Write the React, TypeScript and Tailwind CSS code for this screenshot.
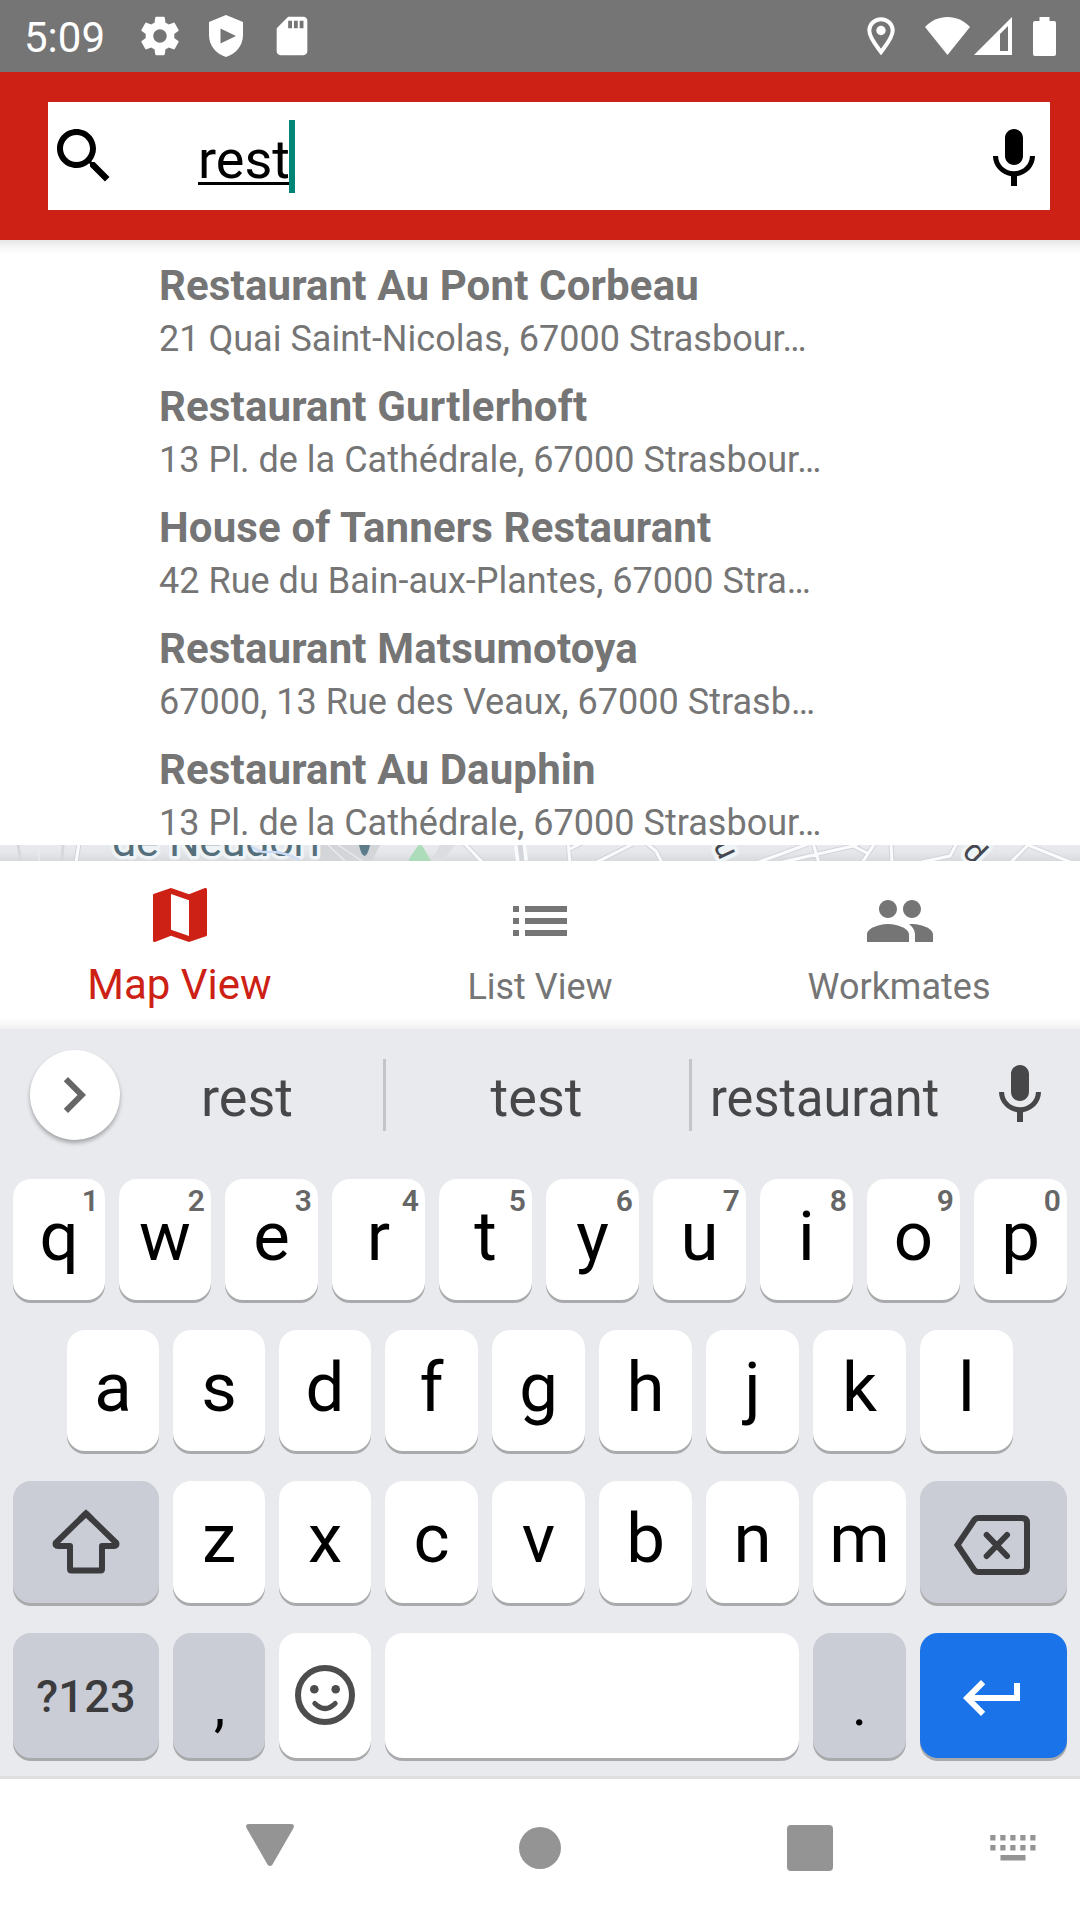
import React from "react";

type Suggestion = { name: string; address: string };

const suggestions: Suggestion[] = [
  { name: "Restaurant Au Pont Corbeau", address: "21 Quai Saint-Nicolas, 67000 Strasbour…" },
  { name: "Restaurant Gurtlerhoft", address: "13 Pl. de la Cathédrale, 67000 Strasbour…" },
  { name: "House of Tanners Restaurant", address: "42 Rue du Bain-aux-Plantes, 67000 Stra…" },
  { name: "Restaurant Matsumotoya", address: "67000, 13 Rue des Veaux, 67000 Strasb…" },
  { name: "Restaurant Au Dauphin", address: "13 Pl. de la Cathédrale, 67000 Strasbour…" },
];

function Glyph({ d, className }: { d: string; className: string }) {
  return (
    <svg viewBox="0 0 24 24" fill="currentColor" className={`block shrink-0 ${className}`}>
      <path d={d} />
    </svg>
  );
}

const MIC =
  "M12 15c1.66 0 2.99-1.34 2.99-3L15 6c0-1.66-1.34-3-3-3S9 4.34 9 6v6c0 1.66 1.34 3 3 3zm5.3-3c0 3-2.54 5.1-5.3 5.1S6.7 15 6.7 12H5c0 3.42 2.72 6.23 6 6.72V22h2v-3.28c3.28-.48 6-3.3 6-6.72h-1.7z";
const SEARCH =
  "M15.5 14h-.79l-.28-.27C15.41 12.59 16 11.11 16 9.5 16 5.91 13.09 3 9.5 3S3 5.91 3 9.5 5.91 16 9.5 16c1.61 0 3.09-.59 4.23-1.57l.27.28v.79l5 4.99L20.49 19l-4.99-5zm-6 0C7.01 14 5 11.99 5 9.5S7.01 5 9.5 5 14 7.01 14 9.5 11.99 14 9.5 14z";
const GEAR =
  "M19.43 12.98c.04-.32.07-.64.07-.98s-.03-.66-.07-.98l2.11-1.65c.19-.15.24-.42.12-.64l-2-3.46c-.12-.22-.39-.3-.61-.22l-2.49 1c-.52-.4-1.08-.73-1.69-.98l-.38-2.65C14.46 2.18 14.25 2 14 2h-4c-.25 0-.46.18-.49.42l-.38 2.65c-.61.25-1.17.59-1.69.98l-2.49-1c-.23-.09-.49 0-.61.22l-2 3.46c-.13.22-.07.49.12.64l2.11 1.65c-.04.32-.07.65-.07.98s.03.66.07.98l-2.11 1.65c-.19.15-.24.42-.12.64l2 3.46c.12.22.39.3.61.22l2.49-1c.52.4 1.08.73 1.69.98l.38 2.65c.03.24.24.42.49.42h4c.25 0 .46-.18.49-.42l.38-2.65c.61-.25 1.17-.59 1.69-.98l2.49 1c.23.09.49 0 .61-.22l2-3.46c.12-.22.07-.49-.12-.64l-2.11-1.65zM12 15.5c-1.93 0-3.5-1.57-3.5-3.5s1.57-3.5 3.5-3.5 3.5 1.57 3.5 3.5-1.57 3.5-3.5 3.5z";
const SD =
  "M18 2h-8L4.02 8 4 20c0 1.1.9 2 2 2h12c1.1 0 2-.9 2-2V4c0-1.1-.9-2-2-2zm-6 6h-2V4h2v4zm3 0h-2V4h2v4zm3 0h-2V4h2v4z";
const MAP =
  "M20.5 3l-.16.03L15 5.1 9 3 3.36 4.9c-.21.07-.36.25-.36.48V20.5c0 .28.22.5.5.5l.16-.03L9 18.9l6 2.1 5.64-1.9c.21-.07.36-.25.36-.48V3.5c0-.28-.22-.5-.5-.5zM15 19l-6-2.11V5l6 2.11V19z";
const LIST = "M3 13h2v-2H3v2zm0 4h2v-2H3v2zm0-8h2V7H3v2zm4 4h14v-2H7v2zm0 4h14v-2H7v2zM7 7v2h14V7H7z";
const PEOPLE =
  "M16 11c1.66 0 2.99-1.34 2.99-3S17.66 5 16 5c-1.66 0-3 1.34-3 3s1.34 3 3 3zm-8 0c1.66 0 2.99-1.34 2.99-3S9.66 5 8 5C6.34 5 5 6.34 5 8s1.34 3 3 3zm0 2c-2.33 0-7 1.17-7 3.5V19h14v-2.5c0-2.33-4.67-3.5-7-3.5zm8 0c-.29 0-.62.02-.97.05 1.16.84 1.97 1.97 1.97 3.45V19h6v-2.5c0-2.33-4.67-3.5-7-3.5z";
const CHEVRON = "M10 6L8.59 7.41 13.17 12l-4.58 4.59L10 18l6-6z";
const RETURN = "M19 7v4H5.83l3.58-3.59L8 6l-6 6 6 6 1.41-1.41L5.83 13H21V7z";

function StatusBar() {
  return (
    <header className="flex h-[72px] items-center bg-[#757575] pl-6 pr-6 text-white">
      <span className="w-[113px] pt-[3px] text-[42px] leading-[72px]">5:09</span>
      <Glyph d={GEAR} className="size-[46px]" />
      <svg viewBox="0 0 34 42" className="ml-[26px] h-[42px] w-[34px]" fill="currentColor">
        <path
          fillRule="evenodd"
          d="M17 0L34 7v13c0 10.500-7 19-17 22C7 39 0 30.500 0 20V7zM11.500 13.500v15L27 21z"
        />
      </svg>
      <Glyph d={SD} className="ml-[26px] size-[46px]" />
      <div className="ml-auto flex items-center">
        <svg viewBox="0 0 28 38" className="h-[38px] w-7">
          <path
            d="M14 2.200C7.500 2.200 2.300 7.200 2.300 13.600C2.300 21 10 29.500 14 35C18 29.500 25.700 21 25.700 13.600C25.700 7.200 20.500 2.200 14 2.200Z"
            fill="none"
            stroke="currentColor"
            strokeWidth="4"
          />
          <circle cx="14" cy="13.500" r="4.700" fill="currentColor" />
        </svg>
        <svg viewBox="0 0 45 38" className="ml-[30px] h-[38px] w-[45px]" fill="currentColor">
          <path d="M0 10C6 3.500 14 0 22.500 0S39 3.500 45 10L22.500 38z" />
        </svg>
        <svg viewBox="0 0 38 38" className="ml-1 h-[38px] w-[38px]" fill="currentColor">
          <path fillRule="evenodd" d="M38 0V38H0zM34 9L26 17V34h8z" />
        </svg>
        <svg viewBox="0 0 23 39" className="ml-[21px] h-[39px] w-[23px]" fill="currentColor">
          <path d="M6.500 0h10v4H21a2 2 0 0 1 2 2v31a2 2 0 0 1-2 2H2a2 2 0 0 1-2-2V6a2 2 0 0 1 2-2h4.500z" />
        </svg>
      </div>
    </header>
  );
}

function SearchBar() {
  return (
    <div className="h-[168px] bg-[#cc2114] pb-[30px] pl-12 pr-[30px] pt-[30px]">
      <div className="flex h-[108px] items-center bg-white text-black">
        <Glyph d={SEARCH} className="size-[72px]" />
        <div className="relative ml-[78px] h-[73px]">
          <span className="block text-[54px] leading-[79px] underline decoration-[2.5px] underline-offset-[4px]">rest</span>
          <span className="absolute left-[91px] top-0 h-[73px] w-1.5 bg-[#008577]" />
        </div>
        <Glyph d={MIC} className="ml-auto size-[72px]" />
      </div>
    </div>
  );
}

function Results() {
  return (
    <ul className="relative h-[605px] overflow-hidden bg-white text-[#757575]">
      <li className="absolute inset-x-0 top-0 h-4 bg-gradient-to-b from-black/10 via-black/3 to-transparent" />
      {suggestions.map((s) => (
        <li key={s.name} className="h-[121px] whitespace-nowrap pl-[159px] pt-[17px]">
          <p className="text-[42px] font-bold leading-[58px] tracking-[0.14px]">{s.name}</p>
          <p className="text-[36px] leading-[48px] tracking-[0.02px]">{s.address}</p>
        </li>
      ))}
    </ul>
  );
}

const ROADS =
  "M79 -2L76 18M464 -2L483 18M568 -2L570 18M568 5L582 -2M633 -1L597 17M646 -2L656 6L662 18M759 17L808 -1M813 -2L819 18M783 17L853 1L867 8M853 1L860 -2M875 -2L862 18M891 -2L892 18M922 17L950 11L957 -2M1010 18L1028 0L1070 17";

function MapStrip() {
  return (
    <div className="h-4 overflow-hidden bg-gradient-to-b from-[#e9eaef] via-[#e5e6ea] to-[#d9dade]">
      <svg viewBox="0 0 1080 16" className="block h-4 w-full font-['Roboto',sans-serif]">
        <path d="M318 0H380L372 16H318z" fill="#d3d5d9" />
        <path d="M431 16L440 0H455L442 16z" fill="#dcdde1" />
        <path d="M18 0L21 16M63 0L62 16" fill="none" stroke="#d6d8dc" strokeWidth="3" />
        <path d="M39 0V16M328 0L345 16M338 0L362 16" fill="none" stroke="#e8eaed" strokeWidth="1.500" />
        <path d={ROADS} fill="none" stroke="#d2d3d8" strokeWidth="5" />
        <path d={ROADS} fill="none" stroke="#fafbfc" strokeWidth="3" />
        <path d="M520 0L522 16" stroke="#fafbfc" strokeWidth="12" />
        <path d="M520 0L522 16" stroke="#d2d5d9" strokeWidth="5" />
        <path d="M409 16V14L417 2Q420 -2 423 2L431 16z" fill="#acdcba" />
        <g strokeLinejoin="round" paintOrder="stroke" stroke="#eef3f5">
          <text x="112" y="11" fontSize="43" fill="#546f7b" strokeWidth="7" textLength="211">
            de Neudorf
          </text>
          <g fill="#45464f" fontSize="32" strokeWidth="8">
            <text transform="translate(713 0) rotate(65)">u</text>
            <text transform="translate(961 8) rotate(45)">d</text>
          </g>
        </g>
        <path d="M251 0Q257 8 270 7T300 15" fill="none" stroke="#cddcf6" strokeWidth="2.500" />
        <path d="M359 0H370Q368 10 364.500 11Q361 10 359 0z" fill="#5d7c89" />
      </svg>
    </div>
  );
}

function BottomNav() {
  return (
    <nav className="relative grid h-[168px] grid-cols-3 bg-white text-[#757575]">
      <div className="flex flex-col items-center pt-[18px] text-[#cc2114]">
        <Glyph d={MAP} className="size-[72px]" />
        <span className="mr-px mt-[9px] text-[42px] leading-[50px]">Map View</span>
      </div>
      <div className="flex flex-col items-center pt-6">
        <Glyph d={LIST} className="size-[72px]" />
        <span className="mt-[5px] text-[36px] leading-[50px]">List View</span>
      </div>
      <div className="flex flex-col items-center pt-6">
        <Glyph d={PEOPLE} className="size-[72px]" />
        <span className="mr-[2px] mt-[5px] text-[36px] leading-[50px]">Workmates</span>
      </div>
      <span className="absolute inset-x-0 bottom-0 h-3 bg-gradient-to-t from-black/6 via-black/2 to-transparent" />
    </nav>
  );
}

const NARROW = "w-[92px]";
const WIDE = "w-[93px]";

function Key({
  children,
  hint,
  tone = "bg-white text-black",
  size,
}: {
  children?: React.ReactNode;
  hint?: string;
  tone?: string;
  size: string;
}) {
  return (
    <div
      className={`relative flex h-full shrink-0 items-center justify-center rounded-[18px] shadow-[0_3px_0_#a9aaac] ${size} ${tone}`}
    >
      {children}
      {hint && (
        <span className="absolute right-[6px] top-[4px] text-[30px] font-semibold leading-9 text-[#666]">{hint}</span>
      )}
    </div>
  );
}

function Letter({ children }: { children: string }) {
  return <span className="mb-[6px] text-[69px] leading-[110px]">{children}</span>;
}

const GREY = "bg-[#cbcdd6] text-[#3c3c3e]";

function SuggestionStrip() {
  return (
    <div className="flex h-[132px] items-center text-[54px] leading-[132px] text-[#474749]">
      <div className="ml-[30px] flex size-[90px] items-center rounded-full bg-white pl-[8px] text-[#666] shadow-[0_3px_4px_rgba(0,0,0,0.3)]">
        <Glyph d={CHEVRON} className="size-[72px]" />
      </div>
      <span className="ml-[12px] w-[230px] pt-[6px] text-center">rest</span>
      <span className="ml-[21px] h-[72px] w-[3px] bg-[#c4c5c9]" />
      <span className="w-[303px] pr-[2px] pt-[6px] text-center">test</span>
      <span className="h-[72px] w-[3px] bg-[#c4c5c9]" />
      <span className="flex w-[268px] justify-center pr-[3px] pt-[6px]">
        <span className="scale-x-[0.935]">restaurant</span>
      </span>
      <Glyph d={MIC} className="mb-[6px] ml-[24px] size-[72px]" />
    </div>
  );
}

function Keyboard() {
  return (
    <section className="h-[747px] bg-[#e8eaed]">
      <SuggestionStrip />
      <div className="flex flex-col px-[13px] pt-[18px]">
        <div className="flex h-[121px] gap-3.5">
          {"qwertyuiop".split("").map((c, i) => (
            <Key key={c} hint={String((i + 1) % 10)} size={i < 2 ? NARROW : WIDE}>
              <Letter>{c}</Letter>
            </Key>
          ))}
        </div>
        <div className="mt-[30px] flex h-[121px] gap-3.5 pl-[54px]">
          {"asdfghjkl".split("").map((c, i) => (
            <Key key={c} size={i < 3 ? NARROW : WIDE}>
              <Letter>{c}</Letter>
            </Key>
          ))}
        </div>
        <div className="mt-[30px] flex h-[122px] gap-3.5">
          <Key tone={GREY} size="w-[146px]">
            <svg viewBox="50 1507 72 70" className="h-[70px] w-[72px]" fill="none" stroke="currentColor" strokeWidth="6">
              <path
                strokeLinejoin="round"
                d="M86 1513.500L116.300 1543Q117 1546 114 1546H102V1569Q102 1570.500 100.500 1570.500H71.500Q70 1570.500 70 1569V1546H58Q55 1546 55.700 1543L86 1513.500"
              />
              <path d="M80 1519.350L86 1513.500L92 1519.350" />
            </svg>
          </Key>
          {"zxcvbnm".split("").map((c, i) => (
            <Key key={c} size={i < 2 ? NARROW : WIDE}>
              <Letter>{c}</Letter>
            </Key>
          ))}
          <Key tone={GREY} size="w-[147px]">
            <svg viewBox="952 1512 80 66" className="ml-[-4px] mt-[6px] h-[66px] w-20" fill="none" stroke="currentColor" strokeWidth="6">
              <path d="M957.500 1545L974 1520.500Q975.500 1518 978.500 1518H1022Q1027 1518 1027 1523V1567Q1027 1572 1022 1572H978.500Q975.500 1572 974 1569.500Z" />
              <path strokeLinecap="round" d="M986.700 1535L1007 1556M1007 1535L986.700 1556" />
            </svg>
          </Key>
        </div>
        <div className="mt-[30px] flex h-[125px] gap-3.5">
          <Key tone={GREY} size="w-[146px]">
            <span className="mt-[2px] text-[45px] font-medium leading-[123px] tracking-[0.2px]">?123</span>
          </Key>
          <Key tone="bg-[#cbcdd6] text-black" size={NARROW}>
            <span className="ml-px mt-[19px] text-[57px] leading-[105px]">,</span>
          </Key>
          <Key tone="bg-white text-[#4d4d4d]" size={NARROW}>
            <svg viewBox="0 0 60 60" className="mb-[2px] size-[60px]" fill="none" stroke="currentColor">
              <circle cx="30" cy="30" r="27" strokeWidth="6" />
              <circle cx="19.300" cy="24.300" r="4.300" fill="currentColor" stroke="none" />
              <circle cx="40.700" cy="24.300" r="4.300" fill="currentColor" stroke="none" />
              <path d="M19.800 38.500Q30 48.500 40.200 38.500" strokeWidth="5" strokeLinecap="round" />
            </svg>
          </Key>
          <Key size="w-[414px]" />
          <Key tone="bg-[#cbcdd6] text-black" size={WIDE}>
            <span className="mt-[19px] text-[57px] leading-[105px]">.</span>
          </Key>
          <Key tone="bg-[#1b73e9] text-white" size="w-[147px]">
            <Glyph d={RETURN} className="mr-px mt-[5px] size-[72px]" />
          </Key>
        </div>
      </div>
    </section>
  );
}

function SystemNav() {
  return (
    <footer className="grid h-[144px] grid-cols-[180px_180px_90px_180px_90px_180px_180px] border-t-[3px] border-[#dedede] bg-white text-[#949494]">
      <div className="col-start-2 flex items-start justify-center pt-[45px]">
        <svg viewBox="0 0 48 42" className="h-[42px] w-12" fill="currentColor">
          <path d="M3 0H45Q49 0 47.500 4L26.500 40.500Q24 43.500 21.500 40.500L.5 4Q-1 0 3 0z" />
        </svg>
      </div>
      <div className="col-start-4 flex items-start justify-center pt-12">
        <span className="size-[42px] rounded-full bg-[#949494]" />
      </div>
      <div className="col-start-6 flex items-start justify-center pt-[46px]">
        <span className="size-[46px] rounded-[4px] bg-[#949494]" />
      </div>
      <div className="col-start-7 flex items-start pl-[90px] pt-[56px]">
        <svg viewBox="0 0 46 26" className="h-[26px] w-[46px]" fill="currentColor">
          {[0, 10, 20, 30, 40].map((x) => (
            <g key={x}>
              <rect x={x + 0.300} y="0" width="5.200" height="5.500" />
              <rect x={x + 0.300} y="10" width="5.200" height="5.500" />
            </g>
          ))}
          <rect x="10.500" y="20" width="25" height="5.500" />
        </svg>
      </div>
    </footer>
  );
}

export default function App() {
  return (
    <main className="h-[1920px] w-[1080px] overflow-hidden bg-white font-['Roboto',sans-serif]">
      <StatusBar />
      <SearchBar />
      <Results />
      <MapStrip />
      <BottomNav />
      <Keyboard />
      <SystemNav />
    </main>
  );
}
